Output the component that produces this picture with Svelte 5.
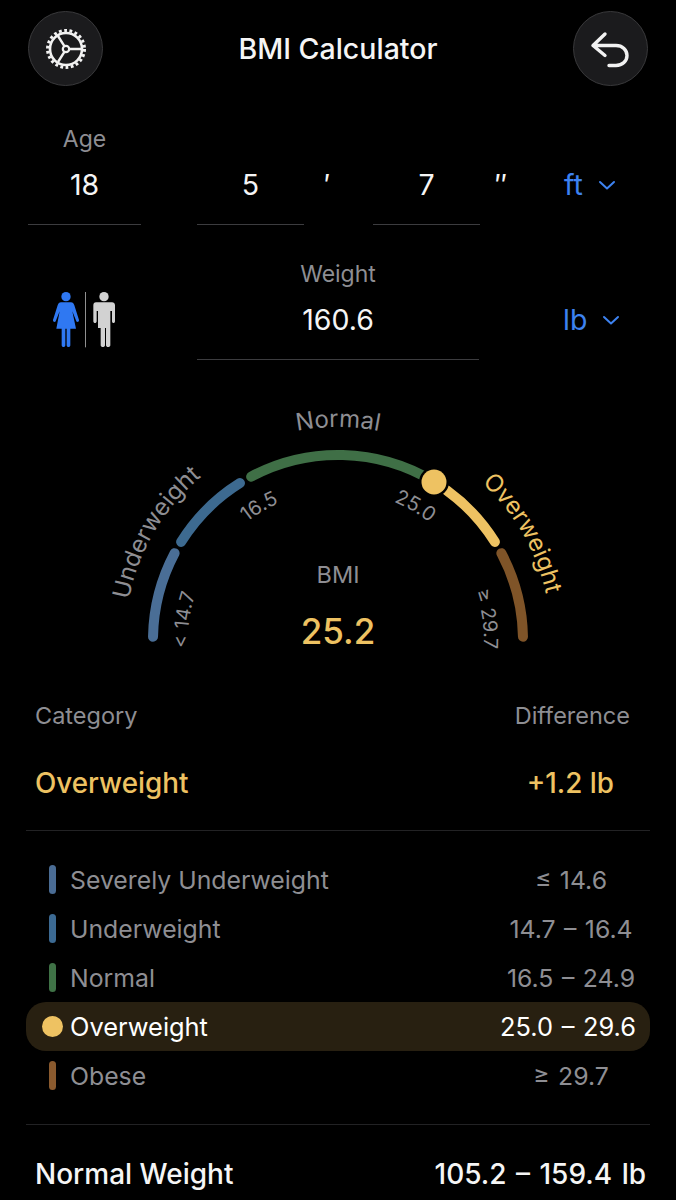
<script>
    const cx = 338, cy = 640

    let pt = (deg, r) => {
        let a = deg * Math.PI / 180
        return [(cx - r * Math.cos(a)).toFixed(2), (cy - r * Math.sin(a)).toFixed(2)]
    }
    let arc = (from, to, r) => {
        let [x1, y1] = pt(from, r)
        let [x2, y2] = pt(to, r)
        return `M${x1} ${y1}A${r} ${r} 0 0 1 ${x2} ${y2}`
    }

    const segments = [
        { from: 1, to: 28, color: '#4a6e96' },
        { from: 32, to: 58, color: '#3d6a90' },
        { from: 62, to: 121, color: '#3f6f46' },
        { from: 126, to: 148, color: '#eec262' },
        { from: 152, to: 179, color: '#7f5428' }
    ]

    const labels = [
        { id: 'l1', text: 'Underweight', mid: 30.5, r: 213, size: 24, color: '#8e8e93' },
        { id: 'l2', text: 'Normal', mid: 90, r: 213, size: 24, color: '#8e8e93' },
        { id: 'l3', text: 'Overweight', mid: 150, r: 213, size: 24, color: '#eec262' },
        { id: 'l4', text: '< 14.7', mid: 7.5, r: 150, size: 19.5, color: '#8e8e93' },
        { id: 'l5', text: '16.5', mid: 59.5, r: 149, size: 20, color: '#8e8e93' },
        { id: 'l6', text: '25.0', mid: 120, r: 149, size: 20, color: '#8e8e93' },
        { id: 'l7', text: '≥ 29.7', mid: 172, r: 146, size: 19.5, color: '#8e8e93' }
    ]

    const ranges = [
        { name: 'Severely Underweight', range: '≤ 14.6', color: '#4a6c94' },
        { name: 'Underweight', range: '14.7 – 16.4', color: '#3c6a93' },
        { name: 'Normal', range: '16.5 – 24.9', color: '#3f7246' },
        { name: 'Overweight', range: '25.0 – 29.6', color: '#eec262', active: true },
        { name: 'Obese', range: '≥ 29.7', color: '#8a5a2e' }
    ]
</script>

<main>
    <header>
        <button class="round" aria-label="Settings">
            <svg width="46" height="46" viewBox="0 0 46 46" fill="none" stroke="#f2f2f2">
                <circle cx="23" cy="23" r="16" stroke-width="2.6" />
                <circle cx="23" cy="23" r="18.5" stroke-width="3" stroke-dasharray="2.8 2.5" />
                <circle cx="23" cy="23" r="3.2" stroke-width="2.2" />
                <path d="M26.2 23H38M21.4 20.2L15 10M21.4 25.8L15 36" stroke-width="2.4" />
            </svg>
        </button>
        <h1>BMI Calculator</h1>
        <button class="round" aria-label="Back">
            <svg width="46" height="46" viewBox="0 0 46 46" fill="none" stroke="#f2f2f2" stroke-width="3.4" stroke-linecap="round" stroke-linejoin="round">
                <path d="M18 8L6 19.5L18 29.5M6 19.5H29C35.5 19.5 40 24 40 29.5C40 35 35.5 39.5 29 39.5H22" />
            </svg>
        </button>
    </header>

    <section class="row height">
        <div class="field age">
            <span class="label">Age</span>
            <span class="value">18</span>
        </div>
        <div class="field">
            <span class="value">5</span>
        </div>
        <span class="mark first">′</span>
        <div class="field">
            <span class="value">7</span>
        </div>
        <span class="mark">″</span>
        <div class="unit">ft
            <svg width="18" height="10" viewBox="0 0 18 10" fill="none" stroke="#3d82f0" stroke-width="2" stroke-linecap="round" stroke-linejoin="round"><path d="M2 2L9 8.5L16 2" /></svg>
        </div>
    </section>

    <section class="row weight">
        <svg class="people" width="66" height="56" viewBox="0 0 198 168">
            <g fill="#2f78f2">
                <circle cx="48" cy="14" r="14" />
                <path d="M33 31H63C68 31 71 35 73 40L87 84C88 89 81 92 79 88L67 58L78 110H61V160C61 167 50 167 50 160V110H46V160C46 167 35 167 35 160V110H19L29 58L17 88C15 92 8 89 9 84L23 40C25 35 28 31 33 31Z" />
            </g>
            <rect x="105" y="0" width="2" height="166" fill="#d8d8d8" />
            <g fill="#d2d2d2">
                <circle cx="162" cy="14" r="14" />
                <path d="M138 31H186C191 31 195 35 195 40V88C195 95 186 95 186 88V57H181V160C181 167 168 167 168 160V108H165V160C165 167 152 167 152 160V108H144V57H140V88C140 95 130 95 130 88V40C130 35 133 31 138 31Z" />
            </g>
        </svg>
        <div class="field wide">
            <span class="label">Weight</span>
            <span class="value">160.6</span>
        </div>
        <div class="unit">lb
            <svg width="18" height="10" viewBox="0 0 18 10" fill="none" stroke="#3d82f0" stroke-width="2" stroke-linecap="round" stroke-linejoin="round"><path d="M2 2L9 8.5L16 2" /></svg>
        </div>
    </section>

    <svg class="gauge" width="676" height="270" viewBox="0 390 676 270">
        <defs>
            {#each labels as l}
                <path id={l.id} d={arc(l.mid - 60, l.mid + 60, l.r)} />
            {/each}
        </defs>
        {#each segments as s}
            <path d={arc(s.from, s.to, 185)} fill="none" stroke={s.color} stroke-width="10" stroke-linecap="round" />
        {/each}
        <circle cx="434" cy="482" r="15" fill="#000" />
        <circle cx="434" cy="482" r="12.5" fill="#eec262" />
        {#each labels as l}
            <text font-size={l.size} fill={l.color}>
                <textPath href={'#' + l.id} startOffset="50%" text-anchor="middle">{l.text}</textPath>
            </text>
        {/each}
        <text x="338" y="583" font-size="23.5" fill="#8e8e93" text-anchor="middle">BMI</text>
        <text x="338" y="644" font-size="35" font-weight="500" fill="#eec262" text-anchor="middle">25.2</text>
    </svg>

    <section class="summary">
        <div class="line muted"><span>Category</span><span>Difference</span></div>
        <div class="line big"><span>Overweight</span><span class="diff">+1.2 lb</span></div>
    </section>

    <ul>
        {#each ranges as r}
            <li class:active={r.active}>
                {#if r.active}
                    <i class="dot" style="background: {r.color}"></i>
                {:else}
                    <i class="bar" style="background: {r.color}"></i>
                {/if}
                <span>{r.name}</span>
                <span class="range">{r.range}</span>
            </li>
        {/each}
    </ul>

    <section class="normal">
        <span>Normal Weight</span>
        <span class="spaced">105.2 – 159.4 lb</span>
    </section>
</main>

<style>
    :global(body) {
        background: #000;
    }

    main {
        width: 676px;
        height: 1200px;
        overflow: hidden;
        background: #000;
        font-family: Inter, "Liberation Sans", sans-serif;
        color: #f5f5f5;
    }

    header {
        display: flex;
        align-items: center;
        justify-content: space-between;
        padding: 11px 28px 0;
    }

    h1 {
        margin: 0;
        font-size: 28.5px;
        font-weight: 500;
    }

    .round {
        width: 75px;
        height: 75px;
        padding: 0;
        display: flex;
        align-items: center;
        justify-content: center;
        border-radius: 50%;
        background: #1b1b1d;
        border: 1px solid #39393b;
    }

    .row {
        display: flex;
        align-items: flex-end;
    }

    .height {
        padding: 39px 0 0 28px;
        height: 100px;
    }

    .field {
        display: flex;
        flex-direction: column;
        align-items: center;
        justify-content: flex-end;
        width: 107px;
        height: 100px;
        box-sizing: border-box;
        border-bottom: 1px solid #3c3c3f;
    }

    .age {
        width: 113px;
        margin-right: 56px;
    }

    .label {
        font-size: 23px;
        line-height: 30px;
        color: #8e8e93;
    }

    .value {
        font-size: 28.5px;
        line-height: 34px;
        margin: 14px 0 22px;
    }

    .mark {
        width: 42px;
        text-align: center;
        font-size: 28px;
        line-height: 34px;
        margin-bottom: 23px;
    }

    .first {
        width: 69px;
        box-sizing: border-box;
        padding-right: 23px;
    }

    .unit {
        display: flex;
        align-items: center;
        gap: 15px;
        font-size: 28.5px;
        line-height: 34px;
        color: #3d82f0;
        margin: 0 0 23px 42px;
    }

    .weight {
        height: 100px;
        padding: 35px 0 0 50px;
    }

    .people {
        margin: 0 81px 12px 0;
    }

    .wide {
        width: 282px;
    }

    .weight .unit {
        margin-left: 84px;
    }

    .gauge {
        display: block;
        margin-top: 30px;
    }

    .summary {
        padding: 41px 46px 0 35px;
    }

    .line {
        display: flex;
        justify-content: space-between;
    }

    .muted {
        font-size: 23.5px;
        line-height: 30px;
        color: #8e8e93;
    }

    .big {
        margin-top: 35px;
        font-size: 27.8px;
        line-height: 34px;
        font-weight: 500;
        color: #eec262;
        padding-right: 16px;
    }

    ul {
        list-style: none;
        margin: 30px 26px 0;
        padding: 24px 0 24px;
        border-top: 1px solid #222224;
        border-bottom: 1px solid #222224;
    }

    li {
        display: flex;
        align-items: center;
        height: 49px;
        padding: 0 14px 0 23px;
        font-size: 24.8px;
        color: #8e8e93;
    }

    li.active {
        color: #fff;
        background: #282011;
        border-radius: 20px;
        padding-left: 16px;
        font-size: 25.4px;
    }

    .bar {
        width: 7px;
        height: 29px;
        border-radius: 4px;
        margin-right: 14px;
    }

    .dot {
        width: 21px;
        height: 21px;
        border-radius: 50%;
        margin-right: 7px;
    }

    .range {
        margin-left: auto;
        min-width: 130px;
        text-align: center;
        word-spacing: 1.5px;
    }

    .normal {
        display: flex;
        justify-content: space-between;
        padding: 31px 30px 0 35px;
        font-size: 28px;
        line-height: 36px;
        font-weight: 500;
    }

    .spaced {
        word-spacing: 2px;
    }
</style>
